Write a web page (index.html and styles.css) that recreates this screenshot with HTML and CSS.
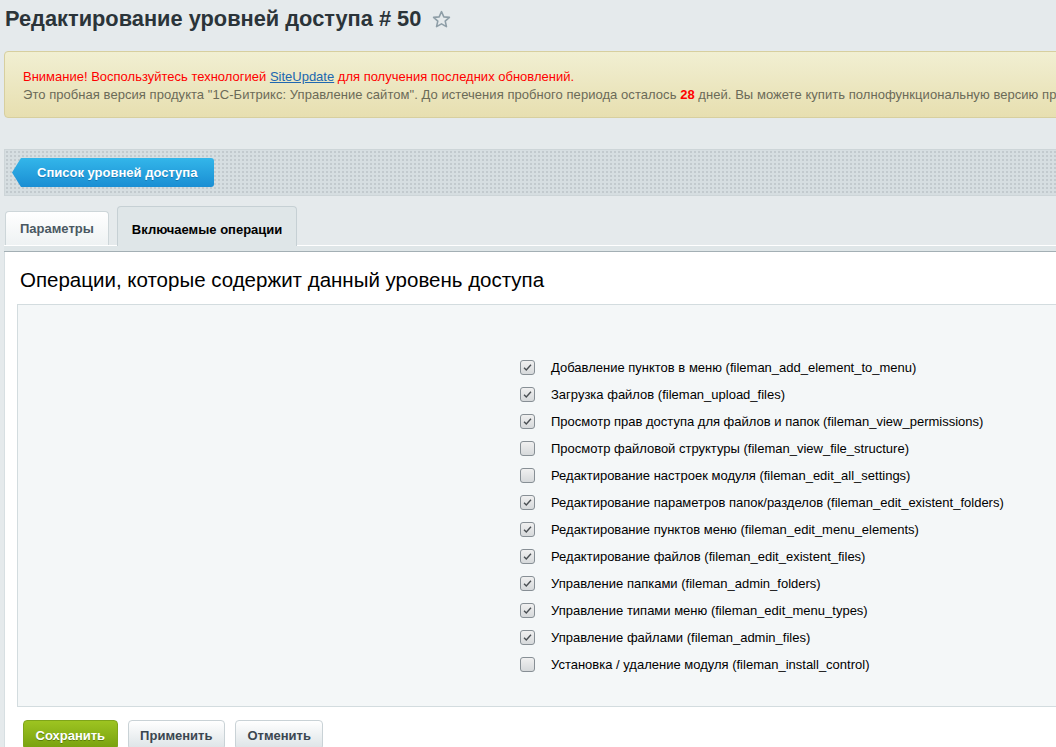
FILE: index.html
```html
<!DOCTYPE html>
<html lang="ru">
<head>
<meta charset="utf-8">
<title>Редактирование уровней доступа # 50</title>
<link rel="stylesheet" href="styles.css">
</head>
<body>
<div class="page">
  <h1 class="title">Редактирование уровней доступа # 50
    <svg class="star" width="19" height="19" viewBox="0 0 18 18"><path d="M9 1.6l2.2 4.9 5.3.5-4 3.6 1.2 5.2L9 13.1l-4.7 2.7 1.2-5.2-4-3.6 5.3-.5z" fill="none" stroke="#8e9ea7" stroke-width="1.5" stroke-linejoin="round"/></svg>
  </h1>

  <div class="notice">
    <div class="notice-warn">Внимание! Воспользуйтесь технологией <a href="#">SiteUpdate</a> для получения последних обновлений.</div>
    <div class="notice-info">Это пробная версия продукта "1С-Битрикс: Управление сайтом". До истечения пробного периода осталось <b>28</b> дней. Вы можете купить полнофункциональную версию продукта.</div>
  </div>

  <div class="toolbar">
    <a class="back-btn" href="#">Список уровней доступа</a>
  </div>

  <div class="tabs">
    <div class="tab">Параметры</div>
    <div class="tab tab-active">Включаемые операции</div>
  </div>
  <div class="tab-strip"></div>

  <div class="content">
    <h2 class="heading">Операции, которые содержит данный уровень доступа</h2>
    <div class="box">
      <div class="ops">
        <label class="op"><span class="cb"><svg viewBox="0 0 15 15"><path d="M3.5 7.8l2.6 2.6 5.4-6" fill="none" stroke="#4a4f53" stroke-width="1.6"/></svg></span>Добавление пунктов в меню (fileman_add_element_to_menu)</label>
        <label class="op"><span class="cb"><svg viewBox="0 0 15 15"><path d="M3.5 7.8l2.6 2.6 5.4-6" fill="none" stroke="#4a4f53" stroke-width="1.6"/></svg></span>Загрузка файлов (fileman_upload_files)</label>
        <label class="op"><span class="cb"><svg viewBox="0 0 15 15"><path d="M3.5 7.8l2.6 2.6 5.4-6" fill="none" stroke="#4a4f53" stroke-width="1.6"/></svg></span>Просмотр прав доступа для файлов и папок (fileman_view_permissions)</label>
        <label class="op"><span class="cb"></span>Просмотр файловой структуры (fileman_view_file_structure)</label>
        <label class="op"><span class="cb"></span>Редактирование настроек модуля (fileman_edit_all_settings)</label>
        <label class="op"><span class="cb"><svg viewBox="0 0 15 15"><path d="M3.5 7.8l2.6 2.6 5.4-6" fill="none" stroke="#4a4f53" stroke-width="1.6"/></svg></span>Редактирование параметров папок/разделов (fileman_edit_existent_folders)</label>
        <label class="op"><span class="cb"><svg viewBox="0 0 15 15"><path d="M3.5 7.8l2.6 2.6 5.4-6" fill="none" stroke="#4a4f53" stroke-width="1.6"/></svg></span>Редактирование пунктов меню (fileman_edit_menu_elements)</label>
        <label class="op"><span class="cb"><svg viewBox="0 0 15 15"><path d="M3.5 7.8l2.6 2.6 5.4-6" fill="none" stroke="#4a4f53" stroke-width="1.6"/></svg></span>Редактирование файлов (fileman_edit_existent_files)</label>
        <label class="op"><span class="cb"><svg viewBox="0 0 15 15"><path d="M3.5 7.8l2.6 2.6 5.4-6" fill="none" stroke="#4a4f53" stroke-width="1.6"/></svg></span>Управление папками (fileman_admin_folders)</label>
        <label class="op"><span class="cb"><svg viewBox="0 0 15 15"><path d="M3.5 7.8l2.6 2.6 5.4-6" fill="none" stroke="#4a4f53" stroke-width="1.6"/></svg></span>Управление типами меню (fileman_edit_menu_types)</label>
        <label class="op"><span class="cb"><svg viewBox="0 0 15 15"><path d="M3.5 7.8l2.6 2.6 5.4-6" fill="none" stroke="#4a4f53" stroke-width="1.6"/></svg></span>Управление файлами (fileman_admin_files)</label>
        <label class="op"><span class="cb"></span>Установка / удаление модуля (fileman_install_control)</label>
      </div>
    </div>
    <div class="buttons">
      <button class="btn btn-save">Сохранить</button>
      <button class="btn">Применить</button>
      <button class="btn">Отменить</button>
    </div>
  </div>
</div>
</body>
</html>
```

FILE: styles.css
```css
html, body {
  margin: 0;
  padding: 0;
  overflow: hidden;
  background: #e5eaec;
  font-family: "Liberation Sans", Arial, sans-serif;
}

.page {
  width: 1200px;
  padding: 0 0 0 4px;
}

.title {
  margin: 0;
  padding: 6px 0 0 1px;
  height: 43px;
  box-sizing: border-box;
  font-size: 21.8px;
  font-weight: bold;
  color: #2b3439;
  line-height: 26px;
  display: flex;
  align-items: flex-start;
}

.star {
  margin: 4px 0 0 11px;
}

.notice {
  margin-top: 8px;
  border: 1px solid #d7cf9f;
  border-radius: 4px;
  background: linear-gradient(#f1efd2, #e7dfb0);
  padding: 16px 18px 13px;
  font-size: 13px;
  line-height: 18px;
  white-space: nowrap;
}

.notice-warn {
  color: #ff0000;
}

.notice-warn a {
  color: #2067b0;
  text-decoration: underline;
}

.notice-info {
  color: #6b6a58;
  letter-spacing: 0.05px;
}

.notice-info b {
  color: #ff0000;
}

.toolbar {
  margin-top: 31px;
  height: 47px;
  box-sizing: border-box;
  border: 1px solid #cdd5d8;
  background-color: #d6dee1;
  background-image: radial-gradient(circle, #c2cace 0.8px, transparent 1px);
  background-size: 4px 4px;
  padding: 8px 7px;
  display: flex;
  align-items: flex-start;
}

.back-btn {
  display: inline-block;
  height: 29px;
  line-height: 29px;
  padding: 0 17px 0 25px;
  font-size: 13px;
  font-weight: bold;
  color: #fff;
  text-decoration: none;
  text-shadow: 0 1px 0 rgba(0, 60, 110, 0.35);
  background: linear-gradient(#33b6ea, #1a8ed3);
  border-radius: 3px;
  clip-path: polygon(9px 0, 100% 0, 100% 100%, 9px 100%, 0 50%);
}

.tabs {
  margin-top: 10px;
  display: flex;
  align-items: flex-end;
  gap: 8px;
  padding-left: 1px;
  position: relative;
  z-index: 1;
}

.tab {
  height: 34px;
  box-sizing: border-box;
  padding: 0 14px;
  display: flex;
  align-items: center;
  font-size: 13px;
  font-weight: bold;
  color: #4a5862;
  border: 1px solid #cdd6d9;
  border-bottom: none;
  border-radius: 4px 4px 0 0;
  background: linear-gradient(#ffffff, #eef2f3);
}

.tab-active {
  height: 40px;
  padding-top: 6px;
  margin-bottom: -1px;
  color: #000;
  background: #dfe6e8;
  border-color: #c6d0d4;
}

.tab-strip {
  height: 5px;
  border-top: 1px solid #ffffff;
  border-bottom: 1px solid #a3afb4;
  background: #dfe6e8;
}

.content {
  background: #fff;
  border-left: 1px solid #d7dfe2;
  padding: 16px 0 20px 12px;
}

.heading {
  margin: 0 0 12px 3px;
  font-size: 20.5px;
  font-weight: normal;
  line-height: 24px;
  color: #000;
}

.box {
  background: #f4f7f8;
  border: 1px solid #d3dcdf;
  padding: 49px 0 28px 502px;
}

.ops {
  display: flex;
  flex-direction: column;
}

.op {
  height: 27px;
  display: flex;
  align-items: center;
  gap: 16px;
  font-size: 13px;
  color: #000;
}

.cb {
  width: 15px;
  height: 15px;
  box-sizing: border-box;
  border: 1px solid #878f95;
  border-radius: 3px;
  background: linear-gradient(#f0f0f0, #d6d9db);
  display: flex;
  align-items: center;
  justify-content: center;
  flex: none;
}

.cb svg {
  width: 13px;
  height: 13px;
}

.buttons {
  display: flex;
  gap: 10px;
  margin: 13px 0 0 6px;
}

.btn {
  height: 30px;
  padding: 0 11.5px;
  font-family: "Liberation Sans", Arial, sans-serif;
  font-size: 13px;
  font-weight: bold;
  color: #3b4750;
  border: 1px solid #c9d2d6;
  border-radius: 4px;
  background: linear-gradient(#ffffff, #dce3e6);
}

.btn-save {
  color: #fff;
  border-color: #7fa51a;
  background: linear-gradient(#9dc421, #76a00e);
  text-shadow: 0 1px 0 rgba(50, 80, 0, 0.5);
}
```
